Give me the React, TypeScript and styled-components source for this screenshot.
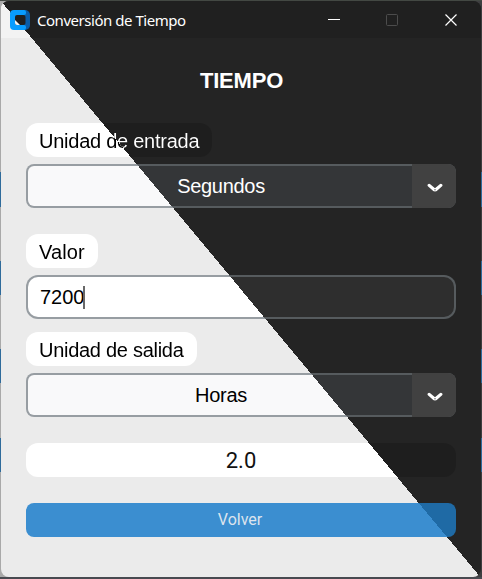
import React from 'react';
import styled, { createGlobalStyle } from 'styled-components';

// Diagonal two-tone fill shared by every surface: light below, dark above.
// Fixed attachment keeps the seam continuous from one part to the next.
const split = (light: string, dark: string) =>
  `linear-gradient(to top right, ${light} 50%, ${dark} 50%) 0 0 / 100vw 100vh no-repeat fixed`;

const GlobalStyle = createGlobalStyle`
  * { box-sizing: border-box; }
  body { margin: 0; overflow: hidden; background: #3f4145; }
`;

const Desktop = styled.div`
  height: 100vh;
  padding: 1px;
  background:
    linear-gradient(#484a50, #484a50) 0 100% / 100% 2px no-repeat,
    linear-gradient(#434843, #434843) 0 0 / 100% 1px no-repeat,
    linear-gradient(
      transparent 172px, #2f6b9b 172px 207px,
      transparent 207px 261px, #2f6b9b 261px 295px,
      transparent 295px 349px, #2f6b9b 349px 383px,
      transparent 383px 438px, #2f6b9b 438px 472px,
      transparent 472px),
    linear-gradient(to right, #a9a9a9 50%, #3e3e40 50%);
`;

const Window = styled.main`
  height: 576px;
  border-radius: 8px;
  overflow: hidden;
  display: flex;
  flex-direction: column;
  background: ${split('#ebebeb', '#242424')};
  font-family: 'Liberation Sans', Arial, sans-serif;
`;

const TitleBar = styled.header`
  flex: 0 0 37px;
  display: flex;
  align-items: center;
  padding-left: 9px;
  background: ${split('#f3f3f3', '#202020')};
`;

const AppTitle = styled.span`
  margin-left: 7px;
  flex: 1;
  color: #fff;
  font: 15px/20px 'Noto Sans', 'Open Sans', sans-serif;
  letter-spacing: -0.47px;
  white-space: nowrap;
`;

const Controls = styled.div`
  display: flex;
  height: 100%;
  padding-right: 1px;
`;

const Control = styled.button`
  width: 58px;
  padding: 0;
  border: 0;
  background: none;
  display: grid;
  place-items: center;
  &:last-child { width: 59px; }
`;

const Form = styled.section`
  display: flex;
  flex-direction: column;
  align-items: flex-start;
  padding: 26px 25px 0;
`;

const Heading = styled.h1`
  margin: 0;
  align-self: stretch;
  text-align: center;
  color: #fff;
  font-size: 22px;
  line-height: 34px;
  font-weight: 700;
  letter-spacing: -0.2px;
  padding-left: 1px;
`;

const Pill = styled.label<{ $top: number; $width: number }>`
  width: ${p => p.$width}px;
  height: 34px;
  margin-top: ${p => p.$top}px;
  padding: 0 0 0 13px;
  border-radius: 12px;
  background: ${split('#ffffff', '#1e1e1e')};
  font-size: 20px;
  line-height: 36px;
  white-space: nowrap;
`;

const Ink = styled.span<{ $spacing?: number }>`
  display: block;
  letter-spacing: ${p => p.$spacing ?? 0}px;
  background: ${split('#000000', '#ffffff')};
  background-clip: text;
  -webkit-background-clip: text;
  color: transparent;
`;

const Field = styled.div<{ $radius: number; $light: string; $dark: string }>`
  align-self: stretch;
  height: 44px;
  margin-top: 7px;
  border: 2px solid transparent;
  border-radius: ${p => p.$radius}px;
  background: ${split('#979da2', '#565b5e')};
  background-clip: border-box;
  display: flex;
  & > :first-child {
    flex: 1;
    border-radius: ${p => p.$radius - 2}px;
    background: ${p => split(p.$light, p.$dark)};
  }
`;

const Choice = styled.div<{ $color: string }>`
  text-align: center;
  color: ${p => p.$color};
  font-size: 20px;
  line-height: 41px;
  letter-spacing: -0.3px;
  padding-left: 2px;
`;

const Arrow = styled.button`
  width: 44px;
  height: 44px;
  margin: -2px -2px -2px 0;
  padding: 3px 0 0 1px;
  border: 0;
  border-radius: 0 8px 8px 0;
  background: #414141;
  display: grid;
  place-items: center;
`;

const ComboField = styled(Field)`
  & > :first-child { border-radius: 6px 0 0 6px; }
`;

const Entry = styled.div`
  display: flex;
  align-items: center;
  padding-left: 12px;
  color: #000;
  font-size: 20px;
  line-height: 40px;
`;

const Caret = styled.i`
  width: 2px;
  height: 23px;
  margin-left: -1.5px;
  background: #686868;
`;

const Result = styled.output`
  align-self: stretch;
  height: 34px;
  margin-top: 26px;
  border-radius: 12px;
  background: ${split('#ffffff', '#1e1e1e')};
  text-align: center;
  font: 22px/35px Roboto, sans-serif;
  color: #111;
`;

const BackButton = styled.button`
  align-self: stretch;
  height: 34px;
  margin-top: 26px;
  padding: 0 2px 1px 0;
  border: 0;
  border-radius: 8px;
  background: ${split('#3b8ed0', '#1f6aa5')};
  color: #dce4ee;
  font: 16px/32px Roboto, sans-serif;
`;

const Logo = () => (
  <svg width="20" height="20" viewBox="0 0 20 20">
    <path d="M13 0h2a5 5 0 0 1 5 5v10a5 5 0 0 1-5 5h-2z" fill="#0a5ca8" />
    <path d="M4 0h10q2 0 2 2v1q0 2-2 2v10q2 0 2 2v1q0 2-2 2H4q-4 0-4-4V4q0-4 4-4z" fill="#089cff" />
    <rect x="5" y="5" width="10.5" height="10" rx="2" fill="#202020" />
    <path d="M5 10v3q0 2 2 2h3z" fill="#f3f3f3" />
  </svg>
);

const Chevron = () => (
  <svg width="16" height="10" viewBox="0 0 16 10" fill="none" stroke="#fff" strokeWidth="3.2" strokeLinecap="round">
    <path d="M2.2 2.4 7.3 6.8" />
    <path d="M13.8 2.4 8.7 6.8" />
    <circle cx="8" cy="6.7" r=".8" fill="#777" stroke="none" />
  </svg>
);

const Combo = ({ value, color }: { value: string; color: string }) => (
  <ComboField $radius={8} $light="#f9f9fa" $dark="#343638">
    <Choice $color={color}>{value}</Choice>
    <Arrow aria-label="Abrir"><Chevron /></Arrow>
  </ComboField>
);

export default function App() {
  return (
    <>
      <GlobalStyle />
      <Desktop>
        <Window>
          <TitleBar>
            <Logo />
            <AppTitle>Conversión de Tiempo</AppTitle>
            <Controls>
              <Control aria-label="Minimizar">
                <svg width="12" height="12"><path d="M0 5.5h12" stroke="#fff" /></svg>
              </Control>
              <Control aria-label="Maximizar">
                <svg width="12" height="12"><rect x=".5" y=".5" width="11" height="11" rx="1" fill="none" stroke="#4c4c4c" /></svg>
              </Control>
              <Control aria-label="Cerrar">
                <svg width="12" height="12"><path d="M.5.5l11 11M11.5.5l-11 11" stroke="#fff" strokeWidth="1.2" /></svg>
              </Control>
            </Controls>
          </TitleBar>
          <Form>
            <Heading>TIEMPO</Heading>
            <Pill $top={25} $width={186}><Ink $spacing={-0.25}>Unidad de entrada</Ink></Pill>
            <Combo value="Segundos" color="#fff" />
            <Pill $top={26} $width={72}><Ink $spacing={0.1}>Valor</Ink></Pill>
            <Field $radius={12} $light="#ffffff" $dark="#2e2e2e">
              <Entry>7200<Caret /></Entry>
            </Field>
            <Pill $top={13} $width={171}><Ink $spacing={-0.28}>Unidad de salida</Ink></Pill>
            <Combo value="Horas" color="#000" />
            <Result>2.0</Result>
            <BackButton>Volver</BackButton>
          </Form>
        </Window>
      </Desktop>
    </>
  );
}
